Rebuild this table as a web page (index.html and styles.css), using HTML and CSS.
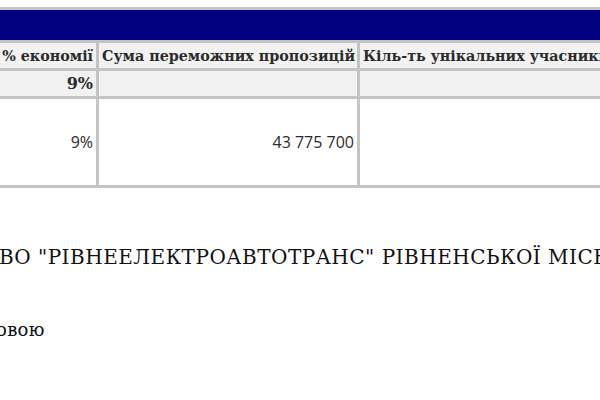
FILE: index.html
```html
<!DOCTYPE html>
<html lang="uk">
<head>
<meta charset="utf-8">
<title>Результати</title>
<link rel="stylesheet" href="styles.css">
</head>
<body>
<div class="page">
  <table class="report">
    <colgroup>
      <col class="c1">
      <col class="c2">
      <col class="c3">
    </colgroup>
    <tr class="band"><td colspan="3"></td></tr>
    <tr class="head">
      <th class="num">% економії</th>
      <th>Сума переможних пропозицій</th>
      <th>Кіль-ть унікальних учасників</th>
    </tr>
    <tr class="total">
      <td class="num">9%</td>
      <td></td>
      <td></td>
    </tr>
    <tr class="data">
      <td class="num">9%</td>
      <td class="num">43 775 700</td>
      <td></td>
    </tr>
  </table>
  <p class="org">ВО "РІВНЕЕЛЕКТРОАВТОТРАНС" РІВНЕНСЬКОЇ МІСЬКОЇ РАДИ</p>
  <p class="note">овою</p>
</div>
</body>
</html>
```

FILE: styles.css
```css
html, body {
  margin: 0;
  padding: 0;
  background: #ffffff;
  overflow: hidden;
}
.page {
  width: 600px;
  height: 400px;
  overflow: hidden;
  padding-top: 7px;
  box-sizing: border-box;
}
.report {
  table-layout: fixed;
  border-collapse: separate;
  border-spacing: 3px;
  background: #c4c4c4;
  margin-left: -120px;
  width: 900px;
}
.report .c1 { width: 213px; }
.report .c2 { width: 258px; }
.report .c3 { width: 420px; }
.report td, .report th {
  padding: 0 3px;
  box-sizing: border-box;
  overflow: hidden;
  white-space: nowrap;
}
.band td {
  background: #000080;
  height: 30px;
}
.head th {
  height: 25px;
  background: #f2f2f2;
  font-family: "DejaVu Serif", serif;
  font-weight: bold;
  font-size: 14.3px;
  color: #2b2b2b;
  text-align: left;
}
.head th.num { text-align: right; }
.total td {
  height: 25px;
  background: #f2f2f2;
  font-family: "DejaVu Serif", serif;
  font-weight: bold;
  font-size: 16px;
  color: #2b2b2b;
}
.data td {
  height: 86px;
  background: #ffffff;
  font-family: "Open Sans", sans-serif;
  font-size: 16px;
  color: #2a2a2a;
}
.num { text-align: right; }
.org {
  margin: 57px 0 0 -1px;
  font-family: "DejaVu Serif", serif;
  font-size: 20px;
  letter-spacing: 0.5px;
  color: #111111;
  white-space: nowrap;
}
.note {
  margin: 50px 0 0 -4px;
  font-family: "DejaVu Serif", serif;
  font-size: 18px;
  letter-spacing: 0.3px;
  color: #111111;
  white-space: nowrap;
}
```
